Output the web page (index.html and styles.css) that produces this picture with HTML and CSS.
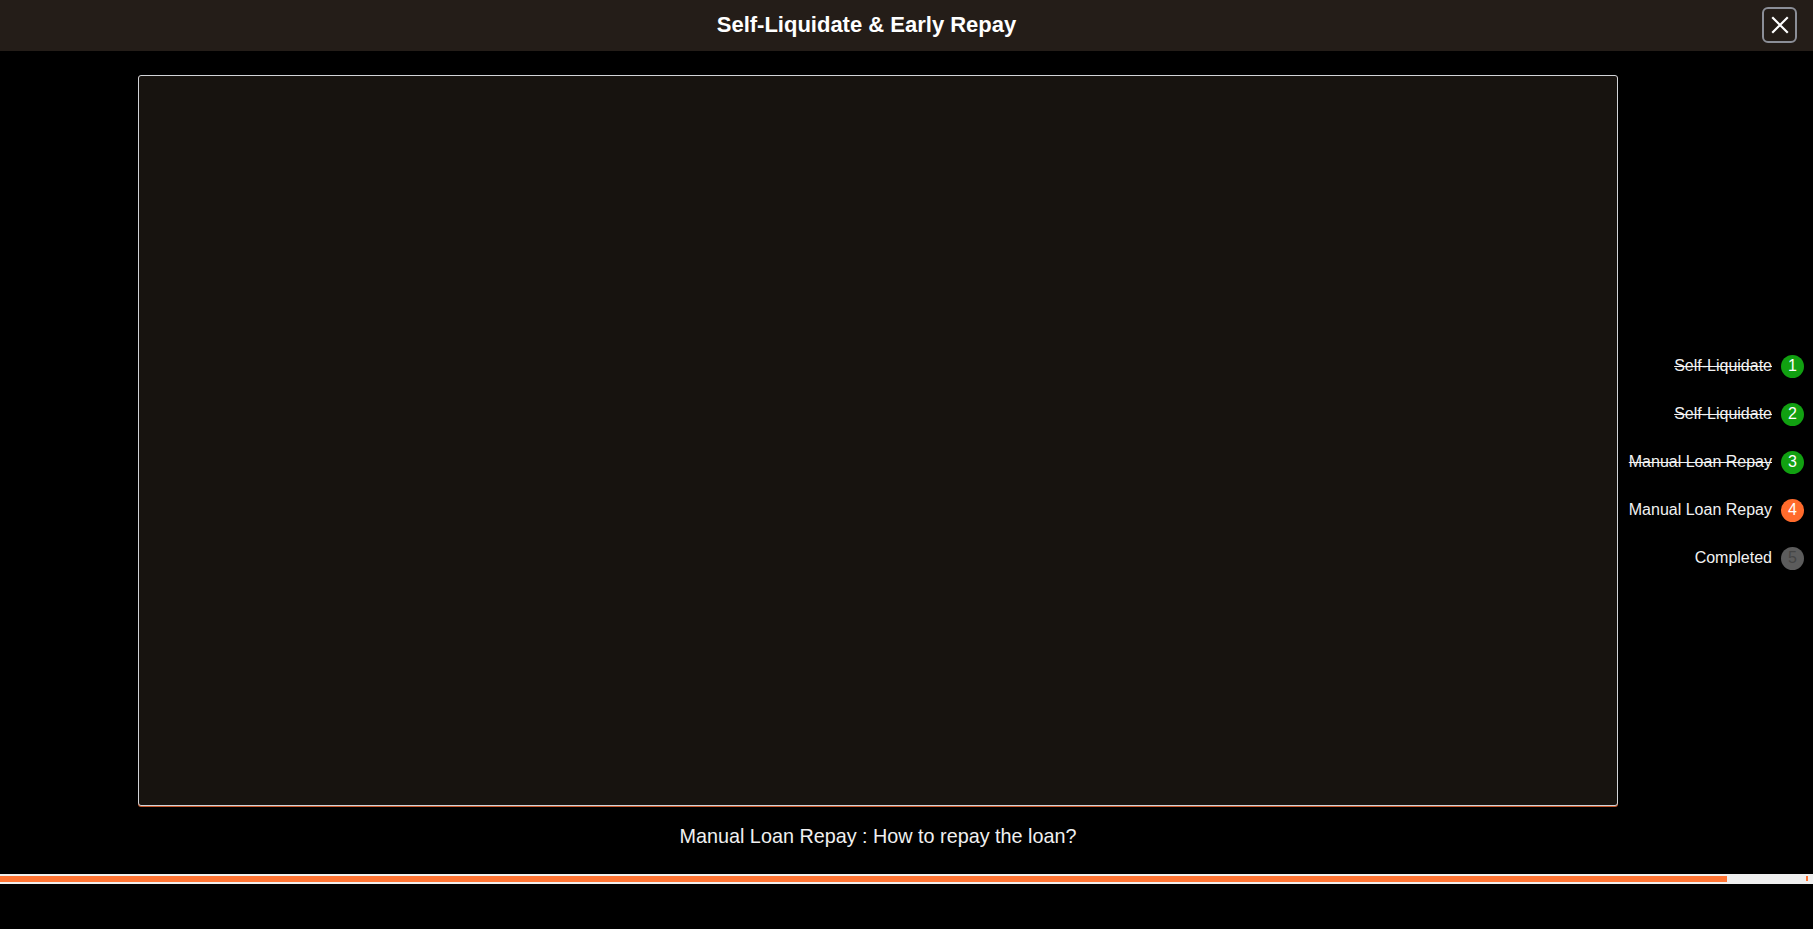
FILE: index.html
```html
<!DOCTYPE html>
<html lang="en">
<head>
<meta charset="utf-8">
<title>Self-Liquidate &amp; Early Repay</title>
<link rel="stylesheet" href="styles.css">
</head>
<body>
<header class="topbar">
  <h1 class="title">Self-Liquidate &amp; Early Repay</h1>
  <div class="close-area">
    <button class="close-btn" aria-label="Close">
      <svg width="20" height="20" viewBox="0 0 20 20"><path d="M3 3 L17 17 M17 3 L3 17" stroke="#fff" stroke-width="2.2" stroke-linecap="square"/></svg>
    </button>
  </div>
</header>
<main class="main">
  <section class="stage">
    <div class="panel"></div>
    <p class="caption">Manual Loan Repay : How to repay the loan?</p>
  </section>
  <nav class="steps">
    <div class="step done"><span class="label">Self-Liquidate</span><span class="num">1</span></div>
    <div class="step done"><span class="label">Self-Liquidate</span><span class="num">2</span></div>
    <div class="step done"><span class="label">Manual Loan Repay</span><span class="num">3</span></div>
    <div class="step current"><span class="label">Manual Loan Repay</span><span class="num">4</span></div>
    <div class="step todo"><span class="label">Completed</span><span class="num">5</span></div>
  </nav>
</main>
<div class="progress">
  <div class="progress-fill" style="width: 1727px"></div>
  <span class="progress-end"></span>
</div>
</body>
</html>
```

FILE: styles.css
```css
html, body {
  margin: 0;
  padding: 0;
  background: #000;
  font-family: "Liberation Sans", Arial, sans-serif;
  color: #f2f2f2;
  overflow: hidden;
}

.topbar {
  height: 51px;
  background: #241d18;
  display: flex;
  align-items: flex-start;
}

.title {
  flex: 1;
  margin: 0;
  text-align: center;
  font-size: 22px;
  font-weight: bold;
  line-height: 50px;
  color: #fff;
}

.close-area {
  width: 80px;
  display: flex;
  justify-content: flex-end;
  padding: 7px 16px 0 0;
  box-sizing: border-box;
}

.close-btn {
  width: 35px;
  height: 36px;
  box-sizing: border-box;
  border: 2px solid #8b8e97;
  border-radius: 6px;
  background: transparent;
  padding: 0;
  display: flex;
  align-items: center;
  justify-content: center;
}

.main {
  height: 823px;
  display: flex;
}

.stage {
  margin-left: 138px;
  width: 1480px;
  padding-top: 24px;
  display: flex;
  flex-direction: column;
}

.panel {
  height: 731px;
  box-sizing: border-box;
  border: 1px solid #d2d4d8;
  border-radius: 3px;
  background: #17130f;
  box-shadow: 0 1px 0 #c4572b;
}

.caption {
  margin: 19px 0 0;
  text-align: center;
  font-size: 19.8px;
  line-height: 23px;
  color: #f0f0f0;
}

.steps {
  flex: 1;
  display: flex;
  flex-direction: column;
  justify-content: center;
  align-items: flex-end;
  gap: 25px;
  padding-right: 9px;
  padding-bottom: 1px;
}

.step {
  display: flex;
  align-items: center;
  gap: 9px;
  height: 23px;
}

.label {
  font-size: 16px;
  line-height: 18px;
  color: #f2f2f2;
}

.done .label {
  text-decoration: line-through;
}

.num {
  width: 23px;
  height: 23px;
  border-radius: 50%;
  display: flex;
  align-items: center;
  justify-content: center;
  font-size: 16px;
  color: #fff;
}

.done .num { background: #11a011; }
.current .num { background: #ff6b2c; }
.todo .num { background: #5c5c5c; color: #454545; }

.progress {
  height: 10px;
  background: #efefef;
  display: flex;
  align-items: center;
  position: relative;
}

.progress-fill {
  height: 6px;
  background: #ff7433;
}

.progress-end {
  position: absolute;
  left: 1806px;
  top: 2px;
  width: 2px;
  height: 5px;
  background: #ff7433;
}
```
